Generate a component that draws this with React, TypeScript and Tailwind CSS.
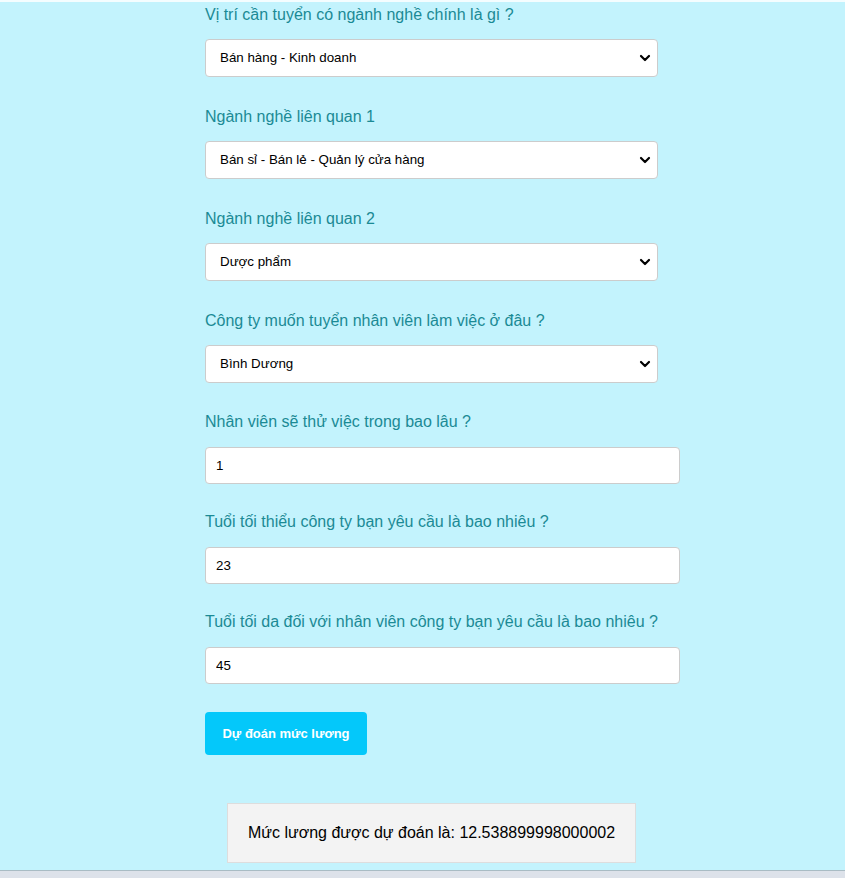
import React from "react";

const font = { fontFamily: '"Liberation Sans", Arial, sans-serif' };

function Chevron() {
  return (
    <svg
      className="pointer-events-none absolute right-[7px] top-1/2 -translate-y-1/2"
      width="12"
      height="12"
      viewBox="0 0 12 12"
    >
      <path d="M2 4 L6 8 L10 4" fill="none" stroke="#000" strokeWidth="2.2" strokeLinecap="round" strokeLinejoin="round" />
    </svg>
  );
}

function SelectField({ label, value }: { label: string; value: string }) {
  return (
    <div className="flex flex-col">
      <label className="h-5 text-[16px] leading-5 text-[#1b8a95]">{label}</label>
      <div className="relative mt-[14px] w-[453px]">
        <select
          defaultValue={value}
          className="h-[38px] w-full appearance-none rounded-[4px] border border-[#cccccc] bg-white pl-[14px] text-[13.33px] text-black outline-none"
          style={font}
        >
          <option>{value}</option>
        </select>
        <Chevron />
      </div>
    </div>
  );
}

function InputField({ label, value }: { label: string; value: string }) {
  return (
    <div className="flex flex-col">
      <label className="h-5 text-[16px] leading-5 text-[#1b8a95]">{label}</label>
      <input
        defaultValue={value}
        className="mt-[15px] h-[37px] w-[475px] rounded-[4px] border border-[#cccccc] bg-white pl-[10px] text-[13.33px] text-black outline-none"
        style={font}
      />
    </div>
  );
}

export default function App() {
  return (
    <div className="flex min-h-[878px] flex-col bg-[#c3f3fd]" style={font}>
      <div className="h-[2px] bg-[#f4fdff]" />
      <div className="flex flex-1 flex-col pl-[205px] pt-[3px]">
        <div className="flex flex-col gap-[30px]">
          <SelectField label="Vị trí cần tuyển có ngành nghề chính là gì ?" value="Bán hàng - Kinh doanh" />
          <SelectField label="Ngành nghề liên quan 1" value="Bán sỉ - Bán lẻ - Quản lý cửa hàng" />
          <SelectField label="Ngành nghề liên quan 2" value="Dược phẩm" />
          <SelectField label="Công ty muốn tuyển nhân viên làm việc ở đâu ?" value="Bình Dương" />
        </div>
        <div className="mt-[29px] flex flex-col gap-[28px]">
          <InputField label="Nhân viên sẽ thử việc trong bao lâu ?" value="1" />
          <InputField label="Tuổi tối thiểu công ty bạn yêu cầu là bao nhiêu ?" value="23" />
          <InputField label="Tuổi tối da đối với nhân viên công ty bạn yêu cầu là bao nhiêu ?" value="45" />
        </div>
        <div className="mt-[28px]">
          <button className="h-[43px] w-[162px] rounded-[4px] bg-[#04c8fa] text-[13px] font-bold text-white">
            Dự đoán mức lương
          </button>
        </div>
        <div className="mt-[48px] flex w-[453px] justify-center">
          <div className="flex h-[60px] w-[409px] items-center justify-center border border-[#dddddd] bg-[#f3f3f3] text-[16px] text-black">
            Mức lương được dự đoán là: 12.538899998000002
          </div>
        </div>
      </div>
      <div className="h-[8px] border-t border-[#a9bcc4] bg-[#dde2ea]" />
    </div>
  );
}
